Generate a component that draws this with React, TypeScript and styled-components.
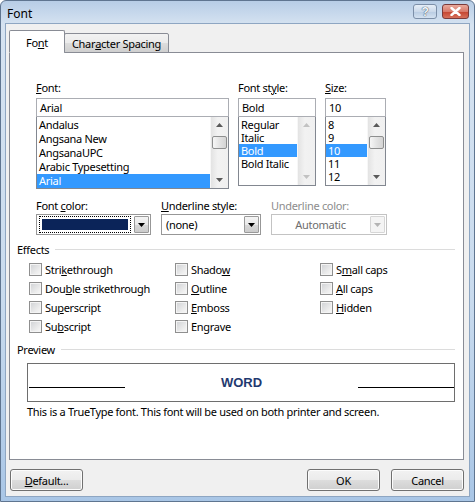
import React from "react";
import styled, { createGlobalStyle } from "styled-components";

const UI_FONT = `"Noto Sans", "DejaVu Sans", sans-serif`;

const GlobalStyle = createGlobalStyle`
  html, body {
    margin: 0;
    padding: 0;
    background: #ffffff;
  }
  body {
    font-family: ${UI_FONT};
    font-size: 11px;
    letter-spacing: -0.3px;
    color: #000;
  }
`;

const fonts = ["Andalus", "Angsana New", "AngsanaUPC", "Arabic Typesetting", "Arial"];
const styles = ["Regular", "Italic", "Bold", "Bold Italic"];
const sizes = ["8", "9", "10", "11", "12"];

type Effect = { pre: string; key: string; post: string };
const effectCols: Effect[][] = [
  [
    { pre: "Stri", key: "k", post: "ethrough" },
    { pre: "Dou", key: "b", post: "le strikethrough" },
    { pre: "Su", key: "p", post: "erscript" },
    { pre: "Su", key: "b", post: "script" },
  ],
  [
    { pre: "Shado", key: "w", post: "" },
    { pre: "", key: "O", post: "utline" },
    { pre: "", key: "E", post: "mboss" },
    { pre: "En", key: "g", post: "rave" },
  ],
  [
    { pre: "S", key: "m", post: "all caps" },
    { pre: "", key: "A", post: "ll caps" },
    { pre: "", key: "H", post: "idden" },
  ],
];

const Arrow: React.FC<{ dir: "up" | "down"; color?: string }> = ({ dir, color = "#4d4d4d" }) => (
  <svg width="7" height="4" viewBox="0 0 7 4">
    {dir === "up" ? (
      <path d="M0 4 L3.5 0 L7 4 Z" fill={color} />
    ) : (
      <path d="M0 0 L7 0 L3.5 4 Z" fill={color} />
    )}
  </svg>
);

const ScrollBar: React.FC<{ disabled?: boolean }> = ({ disabled }) => (
  <Scroll>
    <ScrollBtn>
      <Arrow dir="up" color={disabled ? "#c2c2c2" : "#5a5a5a"} />
    </ScrollBtn>
    <ScrollTrack>{!disabled && <Thumb />}</ScrollTrack>
    <ScrollBtn>
      <Arrow dir="down" color={disabled ? "#c2c2c2" : "#5a5a5a"} />
    </ScrollBtn>
  </Scroll>
);

const App: React.FC = () => {
  return (
    <>
      <GlobalStyle />
      <Window>
        <TitleBar>
          <Title>Font</Title>
          <CaptionButtons>
            <HelpButton>?</HelpButton>
            <CloseButton>
              <svg width="11" height="9" viewBox="0 0 11 9">
                <path d="M1.5 1 L9.5 8 M9.5 1 L1.5 8" stroke="#fff" strokeWidth="2.4" strokeLinecap="round" />
              </svg>
            </CloseButton>
          </CaptionButtons>
        </TitleBar>
        <Client>
          <TabStrip>
            <Tab active>
              Fo<U>n</U>t
            </Tab>
            <Tab>
              Char<U>a</U>cter Spacing
            </Tab>
          </TabStrip>
          <Panel>
            <FontGrid>
              <Field>
                <Label>
                  <U>F</U>ont:
                </Label>
                <TextBox>Arial</TextBox>
                <ListBox height={72}>
                  <ListItems>
                    {fonts.map((f) => (
                      <Item key={f} rowHeight={14} selected={f === "Arial"}>
                        {f}
                      </Item>
                    ))}
                  </ListItems>
                  <ScrollBar />
                </ListBox>
              </Field>
              <Field>
                <Label>
                  Font st<U>y</U>le:
                </Label>
                <TextBox>Bold</TextBox>
                <ListBox height={69}>
                  <ListItems>
                    {styles.map((s) => (
                      <Item key={s} rowHeight={13} selected={s === "Bold"}>
                        {s}
                      </Item>
                    ))}
                  </ListItems>
                  <ScrollBar disabled />
                </ListBox>
              </Field>
              <Field>
                <Label>
                  <U>S</U>ize:
                </Label>
                <TextBox>10</TextBox>
                <ListBox height={69}>
                  <ListItems>
                    {sizes.map((s) => (
                      <Item key={s} rowHeight={13} selected={s === "10"}>
                        {s}
                      </Item>
                    ))}
                  </ListItems>
                  <ScrollBar />
                </ListBox>
              </Field>
            </FontGrid>

            <ComboGrid>
              <Field>
                <Label>
                  Font <U>c</U>olor:
                </Label>
                <Combo>
                  <ComboValue>
                    <FocusRing>
                      <Swatch />
                    </FocusRing>
                  </ComboValue>
                  <DropButton>
                    <Arrow dir="down" color="#000" />
                  </DropButton>
                </Combo>
              </Field>
              <Field>
                <Label>
                  <U>U</U>nderline style:
                </Label>
                <Combo>
                  <ComboValue>(none)</ComboValue>
                  <DropButton>
                    <Arrow dir="down" color="#000" />
                  </DropButton>
                </Combo>
              </Field>
              <Field>
                <Label disabled>Underline color:</Label>
                <Combo disabled>
                  <ComboValue center disabled>
                    Automatic
                  </ComboValue>
                  <DropButton disabled>
                    <Arrow dir="down" color="#b4b4b4" />
                  </DropButton>
                </Combo>
              </Field>
            </ComboGrid>

            <GroupHeader gap={7}>
              <span>Effects</span>
              <Rule />
            </GroupHeader>
            <EffectsGrid>
              {effectCols.map((col, ci) => (
                <EffectCol key={ci}>
                  {col.map((e) => (
                    <CheckRow key={e.pre + e.key + e.post}>
                      <CheckBox />
                      <span>
                        {e.pre}
                        <U>{e.key}</U>
                        {e.post}
                      </span>
                    </CheckRow>
                  ))}
                </EffectCol>
              ))}
            </EffectsGrid>

            <GroupHeader gap={6}>
              <span>Preview</span>
              <Rule />
            </GroupHeader>
            <PreviewBox>
              <BaseLine />
              <Word>WORD</Word>
              <BaseLine />
            </PreviewBox>
            <Note>This is a TrueType font. This font will be used on both printer and screen.</Note>
          </Panel>
          <ButtonRow>
            <Button>
              <U>D</U>efault...
            </Button>
            <Spacer />
            <Button>OK</Button>
            <Button>Cancel</Button>
          </ButtonRow>
        </Client>
      </Window>
    </>
  );
};

const Window = styled.div`
  width: 475px;
  height: 502px;
  box-sizing: border-box;
  display: flex;
  flex-direction: column;
  border: 1px solid #5f7590;
  border-radius: 6px 6px 0 0;
  background: linear-gradient(to bottom, #b7cde6 0px, #d6e3f1 24px, #c9dbee 60%, #a9c6e6 100%);
  overflow: hidden;
`;

const TitleBar = styled.div`
  height: 22px;
  display: flex;
  align-items: center;
  justify-content: space-between;
  padding: 0 5px 0 6px;
`;

const Title = styled.div`
  font-size: 12px;
  letter-spacing: 0;
  color: #000;
  margin-top: 3px;
`;

const CaptionButtons = styled.div`
  display: flex;
  align-items: center;
  gap: 5px;
  margin-top: -1px;
`;

const HelpButton = styled.div`
  width: 24px;
  height: 15px;
  box-sizing: border-box;
  border: 1px solid #7c8fa8;
  border-radius: 3px;
  background: linear-gradient(to bottom, #e6eef7 0%, #cbd9ea 50%, #b8cbe2 51%, #d4e2f1 100%);
  display: flex;
  align-items: center;
  justify-content: center;
  font-family: "Liberation Sans", sans-serif;
  font-weight: bold;
  font-size: 12px;
  color: #f4f6f9;
  text-shadow: 0 0 1px #3b4b63, 0 0 1px #3b4b63;
`;

const CloseButton = styled.div`
  width: 27px;
  height: 15px;
  box-sizing: border-box;
  border: 1px solid #7a3b3b;
  border-radius: 3px;
  background: linear-gradient(to bottom, #e9a99c 0%, #d87a6b 50%, #c4432f 51%, #d6705b 100%);
  display: flex;
  align-items: center;
  justify-content: center;
`;

const Client = styled.div`
  flex: 1;
  margin: 0 4px 4px 4px;
  border: 1px solid #8ea6c2;
  background: #f0f0f0;
  display: flex;
  flex-direction: column;
  padding: 6px 5px 0 3px;
`;

const TabStrip = styled.div`
  display: flex;
  align-items: flex-end;
  height: 23px;
  position: relative;
  z-index: 1;
  margin-bottom: -1px;
`;

const Tab = styled.div<{ active?: boolean }>`
  box-sizing: border-box;
  height: ${(p) => (p.active ? 23 : 20)}px;
  padding: 0 ${(p) => (p.active ? 16 : 7)}px;
  display: flex;
  align-items: center;
  border: 1px solid #898c95;
  border-bottom: ${(p) => (p.active ? "1px solid #fff" : "1px solid #898c95")};
  border-radius: 2px 2px 0 0;
  background: ${(p) =>
    p.active ? "#ffffff" : "linear-gradient(to bottom, #f2f2f2 0%, #ebebeb 50%, #dddddd 51%, #cfcfcf 100%)"};
  margin-left: ${(p) => (p.active ? 0 : -1)}px;
  padding-top: ${(p) => (p.active ? 2 : 0)}px;
`;

const Panel = styled.div`
  height: 408px;
  box-sizing: border-box;
  background: #fff;
  border: 1px solid #898c95;
  padding: 28px 8px 0 7px;
  display: flex;
  flex-direction: column;
`;

const FontGrid = styled.div`
  display: grid;
  grid-template-columns: 193px 78px 61px;
  column-gap: 9px;
  padding-left: 19px;
  align-items: start;
`;

const Field = styled.div`
  display: flex;
  flex-direction: column;
`;

const Label = styled.div<{ disabled?: boolean }>`
  height: 14px;
  line-height: 14px;
  margin-bottom: 3px;
  color: ${(p) => (p.disabled ? "#8d8d8d" : "#000")};
  white-space: nowrap;
`;

const U = styled.span`
  text-decoration: underline;
`;

const TextBox = styled.div`
  height: 19px;
  box-sizing: border-box;
  border: 1px solid #abadb3;
  padding: 0 3px;
  line-height: 17px;
  background: #fff;
`;

const ListBox = styled.div<{ height: number }>`
  height: ${(p) => p.height}px;
  box-sizing: border-box;
  border: 1px solid #828790;
  border-top: none;
  display: flex;
  background: #fff;
`;

const ListItems = styled.div`
  flex: 1;
  padding-top: 1px;
  overflow: hidden;
`;

const Item = styled.div<{ rowHeight: number; selected?: boolean }>`
  height: ${(p) => p.rowHeight}px;
  line-height: ${(p) => p.rowHeight}px;
  padding-left: 2px;
  white-space: nowrap;
  background: ${(p) => (p.selected ? "#3399ff" : "transparent")};
  color: ${(p) => (p.selected ? "#fff" : "#000")};
`;

const Scroll = styled.div`
  width: 17px;
  display: flex;
  flex-direction: column;
  background: linear-gradient(to right, #e3e3e3, #f2f2f2 40%, #f0f0f0);
  border-left: 1px solid #f7f7f7;
`;

const ScrollBtn = styled.div`
  height: 16px;
  display: flex;
  align-items: center;
  justify-content: center;
`;

const ScrollTrack = styled.div`
  flex: 1;
  padding: 3px 1px 0 1px;
`;

const Thumb = styled.div`
  height: 13px;
  box-sizing: border-box;
  border: 1px solid #8e8f8f;
  border-radius: 2px;
  background: linear-gradient(to right, #f6f6f6, #e3e3e3 50%, #d4d4d4);
`;

const ComboGrid = styled.div`
  display: grid;
  grid-template-columns: 115px 100px 116px;
  column-gap: 10px;
  padding-left: 19px;
  margin-top: 10px;
`;

const Combo = styled.div<{ disabled?: boolean }>`
  height: 21px;
  box-sizing: border-box;
  border: 1px solid ${(p) => (p.disabled ? "#c3c3c3" : "#979797")};
  display: flex;
  background: #fff;
  margin-top: -2px;
`;

const ComboValue = styled.div<{ center?: boolean; disabled?: boolean }>`
  flex: 1;
  display: flex;
  align-items: center;
  justify-content: ${(p) => (p.center ? "center" : "flex-start")};
  padding: 0 ${(p) => (p.center ? 0 : 4)}px;
  color: ${(p) => (p.disabled ? "#6d6d6d" : "#000")};
`;

const FocusRing = styled.div`
  flex: 1;
  margin: 0 -2px;
  height: 17px;
  box-sizing: border-box;
  border: 1px dotted #000;
  padding: 2px;
`;

const Swatch = styled.div`
  height: 100%;
  background: #0b2459;
`;

const DropButton = styled.div<{ disabled?: boolean }>`
  width: 15px;
  margin: 1px;
  box-sizing: border-box;
  border: 1px solid ${(p) => (p.disabled ? "#d6d6d6" : "#9a9a9a")};
  border-radius: 1px;
  background: ${(p) =>
    p.disabled ? "#f4f4f4" : "linear-gradient(to bottom, #f4f4f4 0%, #e9e9e9 50%, #d8d8d8 51%, #cccccc 100%)"};
  display: flex;
  align-items: center;
  justify-content: center;
`;

const GroupHeader = styled.div<{ gap: number }>`
  display: flex;
  align-items: center;
  gap: 6px;
  height: 14px;
  margin-top: ${(p) => p.gap}px;
`;

const Rule = styled.div`
  flex: 1;
  height: 1px;
  background: #dcdcdc;
  margin-top: 1px;
`;

const EffectsGrid = styled.div`
  display: grid;
  grid-template-columns: 146px 145px 1fr;
  padding-left: 12px;
  margin-top: 4px;
`;

const EffectCol = styled.div`
  display: flex;
  flex-direction: column;
`;

const CheckRow = styled.div`
  height: 19px;
  display: flex;
  align-items: center;
  gap: 3px;
`;

const CheckBox = styled.div`
  width: 13px;
  height: 13px;
  box-sizing: border-box;
  border: 1px solid #8f8f8f;
  box-shadow: inset 0 0 0 1px #f4f4f4;
  background: linear-gradient(135deg, #cfd1d4 0%, #eeeeee 70%, #f8f8f8 100%);
  flex-shrink: 0;
`;

const PreviewBox = styled.div`
  margin: 7px 0 0 10px;
  height: 39px;
  box-sizing: border-box;
  border: 1px solid #6e6e6e;
  display: flex;
  align-items: center;
  padding: 0 0 0 1px;
`;

const BaseLine = styled.div`
  width: 96px;
  height: 1px;
  background: #000;
  margin-top: 9px;
`;

const Word = styled.div`
  flex: 1;
  text-align: center;
  font-family: "Liberation Sans", Arial, sans-serif;
  font-weight: bold;
  font-size: 13px;
  letter-spacing: 0;
  color: #1f3a70;
`;

const Note = styled.div`
  margin: 3px 0 0 10px;
  height: 14px;
  line-height: 14px;
  white-space: nowrap;
`;

const ButtonRow = styled.div`
  display: flex;
  gap: 11px;
  margin-top: 9px;
  padding-left: 1px;
`;

const Spacer = styled.div`
  flex: 1;
`;

const Button = styled.div`
  width: 73px;
  height: 22px;
  box-sizing: border-box;
  border: 1px solid #707070;
  border-radius: 3px;
  background: linear-gradient(to bottom, #f2f2f2 0%, #ebebeb 50%, #dddddd 51%, #cfcfcf 100%);
  box-shadow: inset 0 0 0 1px #fcfcfc;
  display: flex;
  align-items: center;
  justify-content: center;
`;

export default App;
